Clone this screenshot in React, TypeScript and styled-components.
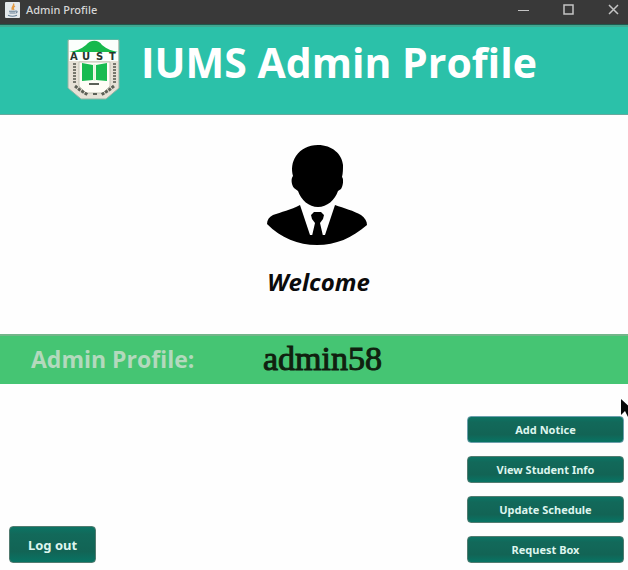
import React from "react";
import styled, { createGlobalStyle } from "styled-components";

const GlobalStyle = createGlobalStyle`
  * { box-sizing: border-box; }
  body { margin: 0; background: #fefefe; }
`;

const Window = styled.div`
  position: relative;
  display: flex;
  flex-direction: column;
  min-height: 100vh;
  overflow: hidden;
  font-family: "Open Sans", "Noto Sans", sans-serif;
  background: #fefefe;
`;

const TitleBar = styled.header`
  display: flex;
  align-items: center;
  height: 25px;
  padding: 0 8px 5px 5px;
  background: #393939;
  border-bottom: 1px solid #1d5a4e;
  color: #d6d6d6;
`;

const WindowTitle = styled.span`
  flex: 1;
  margin-left: 6px;
  font-family: "Noto Sans", sans-serif;
  font-size: 11px;
  font-weight: 500;
  line-height: 16px;
`;

const WindowControls = styled.div`
  display: flex;
  gap: 32px;
`;

const ControlButton = styled.button`
  display: flex;
  padding: 0;
  border: 0;
  background: none;
  color: #c4c4c4;
`;

const Banner = styled.div`
  display: flex;
  align-items: flex-start;
  height: 90px;
  padding: 12px 24px 0 67px;
  gap: 20px;
  background: #2bc1a9;
  border-top: 2px solid #43a691;
  border-bottom: 1px solid #67a99d;
`;

const Heading = styled.h1`
  margin: 0;
  font-size: 41px;
  font-weight: 700;
  line-height: 46px;
  white-space: nowrap;
  color: #fff;
`;

const Hero = styled.section`
  display: flex;
  flex-direction: column;
  align-items: center;
  height: 219px;
  padding: 30px 0 0 6px;
`;

const Welcome = styled.p`
  margin: 17px 0 0;
  padding-left: 3px;
  font-size: 24px;
  font-style: italic;
  font-weight: 700;
  line-height: 36px;
  color: #0b0b0b;
`;

const ProfileBand = styled.section`
  display: grid;
  grid-template-columns: 232px 1fr;
  align-items: center;
  height: 50px;
  padding: 0 0 2px 31px;
  background: #45c573;
  border-top: 2px solid #74b58a;
`;

const BandLabel = styled.span`
  font-size: 23px;
  font-weight: 700;
  line-height: 32px;
  color: #b3d9bd;
`;

const BandValue = styled.span`
  font-family: "Liberation Serif", serif;
  font-size: 34px;
  line-height: 32px;
  color: #10200f;
  -webkit-text-stroke: 1px #10200f;
`;

const Actions = styled.section`
  flex: 1;
  display: flex;
  align-items: flex-end;
  justify-content: space-between;
  padding: 31px 4px 7px 9px;
`;

const ActionList = styled.div`
  display: flex;
  flex-direction: column;
  gap: 13px;
  width: 157px;
`;

const ActionButton = styled.button<{ $large?: boolean; $focused?: boolean }>`
  height: ${(p) => (p.$large ? 37 : 27)}px;
  width: ${(p) => (p.$large ? "87px" : "100%")};
  padding: 1px 0 0;
  border: 1px solid ${(p) => (p.$focused ? "#6d9fac" : "#527b70")};
  border-radius: 4px;
  background: linear-gradient(#0b7464, #12695a 20%, #126455 70%, #087464);
  color: #ddf5ee;
  font-family: "Noto Sans", sans-serif;
  font-size: ${(p) => (p.$large ? 13 : 11)}px;
  font-weight: 700;
  line-height: 18px;
`;

const Pointer = styled.svg`
  position: absolute;
  top: 398px;
  right: -5px;
`;

const CrestLetters = styled.text`
  font-family: "DejaVu Sans", sans-serif;
  font-size: 10px;
  font-weight: 700;
  fill: #26352d;
`;

const JavaIcon = () => (
  <svg width="15" height="16" viewBox="0 0 15 16" aria-hidden="true">
    <rect width="15" height="16" rx="1" fill="#e4e8eb" />
    <path d="M8.5 1.5C10 4 5.5 5 7.3 8M10 4C7.8 5.2 8 6.2 9 8" fill="none" stroke="#e39a43" strokeWidth="1.4" />
    <path d="M4 9.2h6.5M4.5 11h5.5M3 13.3c2.5 1 6.5 1 9 0M10.5 9c2.3-.4 2 1.8 0 2.2" fill="none" stroke="#647e95" strokeWidth="1.1" />
  </svg>
);

const Crest = () => (
  <svg width="54" height="61" viewBox="0 0 54 61" role="img" aria-label="AUST crest">
    <path d="M1 1h51v48L39 60H14L1 49Z" fill="#e6e1d6" stroke="#8fb5a4" />
    <path d="M2 1h49v21H2Z" fill="#fbfffc" />
    <path d="M2 13c7-1 12-3 17-7 4-5 12-6 16 0 5 4 10 6 16 7Z" fill="#16b94c" />
    <CrestLetters x="3 15 29 42" y="21">AUST</CrestLetters>
    <path d="M12 23h31v24l-7 7H19l-7-7Z" fill="#fffdf6" stroke="#c2c3b5" />
    <path d="M15 24l11 2v15l-11 1ZM40 24l-11 2v15l11 1Z" fill="#18bb50" />
    <path d="M27.5 25v17" stroke="#dff5db" strokeWidth="2" />
    <path d="M7.5 24v20M47.500 24v20" stroke="#77786e" strokeWidth="3" strokeDasharray="2 1" />
    <path d="m8 47 5 4 8 5M47 47l-5 4-8 5" fill="none" stroke="#5d6157" strokeWidth="3" strokeDasharray="3 1" />
    <path d="M26 55h4M22 45h10" stroke="#5d6157" strokeWidth="2" />
  </svg>
);

const Avatar = () => (
  <svg width="100" height="102" viewBox="0 0 100 102" role="img" aria-label="Admin">
    <path d="M51 0C65 0 75 9 76 20c0 4 0 8-1 12 2 2 1 9-1 12l-3 2C68 55 60 62 51 62S34 55 31 46l-4-3c-3-4-3-10-1-12-2-7-1-14 3-20C34 4 41 0 51 0Z" />
    <path d="M33 60C24 65 14 67 6 70c-4 2-6 5-6 9 14 14 31 21 50 21s35-7 50-20c0-4-2-7-6-10-7-4-17-7-26-10L58 90H43Z" />
    <path d="M45 74l-1-4 3-3h7l3 3-1 4-3 4 3 13H45l3-13Z" />
  </svg>
);

export default function App() {
  return (
    <Window>
      <GlobalStyle />
      <TitleBar>
        <JavaIcon />
        <WindowTitle>Admin Profile</WindowTitle>
        <WindowControls>
          <ControlButton aria-label="Minimize">
            <svg width="13" height="13" viewBox="0 0 13 13"><path d="M1 7.5h11" stroke="currentColor" /></svg>
          </ControlButton>
          <ControlButton aria-label="Maximize">
            <svg width="13" height="13" viewBox="0 0 13 13"><path d="M2 2h9v9H2Z" fill="none" stroke="currentColor" strokeWidth="1.5" /></svg>
          </ControlButton>
          <ControlButton aria-label="Close">
            <svg width="13" height="13" viewBox="0 0 13 13"><path d="m2 2 9 9m0-9-9 9" stroke="currentColor" strokeWidth="1.5" /></svg>
          </ControlButton>
        </WindowControls>
      </TitleBar>
      <Banner>
        <Crest />
        <Heading>IUMS Admin Profile</Heading>
      </Banner>
      <Hero>
        <Avatar />
        <Welcome>Welcome</Welcome>
      </Hero>
      <ProfileBand>
        <BandLabel>Admin Profile:</BandLabel>
        <BandValue>admin58</BandValue>
      </ProfileBand>
      <Actions>
        <ActionButton $large>Log out</ActionButton>
        <ActionList>
          <ActionButton $focused>Add Notice</ActionButton>
          <ActionButton>View Student Info</ActionButton>
          <ActionButton>Update Schedule</ActionButton>
          <ActionButton>Request Box</ActionButton>
        </ActionList>
      </Actions>
      <Pointer width="13" height="21" viewBox="0 0 13 21" aria-hidden="true">
        <path d="M1 1v16l4-4 3 6 3-1-3-6h5Z" fill="#080808" />
      </Pointer>
    </Window>
  );
}
